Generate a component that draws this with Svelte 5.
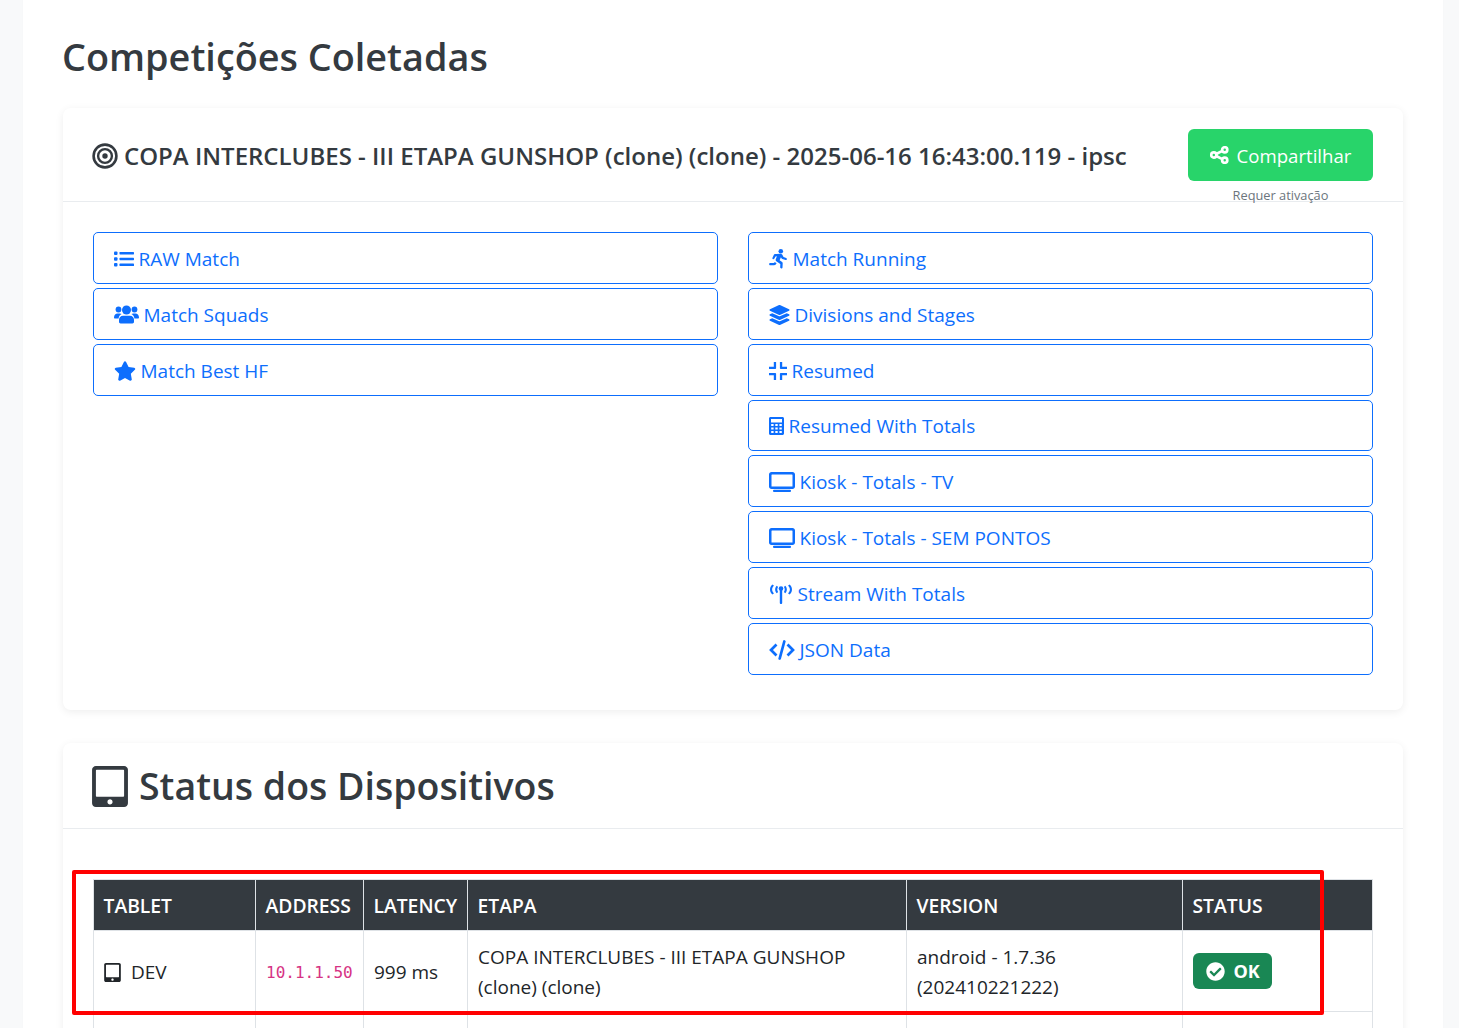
<script>
  const left = [
    { icon: "list", label: "RAW Match" },
    { icon: "users", label: "Match Squads" },
    { icon: "star", label: "Match Best HF" },
  ];
  const right = [
    { icon: "running", label: "Match Running" },
    { icon: "layers", label: "Divisions and Stages" },
    { icon: "compress", label: "Resumed" },
    { icon: "calc", label: "Resumed With Totals" },
    { icon: "tv", label: "Kiosk - Totals - TV" },
    { icon: "tv", label: "Kiosk - Totals - SEM PONTOS" },
    { icon: "tower", label: "Stream With Totals" },
    { icon: "code", label: "JSON Data" },
  ];
  const tablet = "M400 0H48C21.5 0 0 21.5 0 48v416c0 26.5 21.500 48 48 48h352c26.500 0 48-21.500 48-48V48c0-26.500-21.500-48-48-48zM224 480c-17.700 0-32-14.300-32-32s14.300-32 32-32 32 14.300 32 32-14.300 32-32 32zm176-108c0 6.600-5.400 12-12 12H60c-6.600 0-12-5.400-12-12V60c0-6.600 5.400-12 12-12h328c6.600 0 12 5.400 12 12v312z";
</script>

{#snippet icon(name)}
  {#if name === "list"}
    <svg class="ic" style="width:20px" viewBox="0 0 20 16" fill="currentColor"><rect x="0" y="0.500" width="3.500" height="3.500" rx="1" /><rect x="0" y="6.200" width="3.500" height="3.500" rx="1" /><rect x="0" y="12" width="3.500" height="3.500" rx="1" /><rect x="5.500" y="1" width="14.500" height="2.400" rx=".6" /><rect x="5.500" y="6.800" width="14.500" height="2.400" rx=".6" /><rect x="5.500" y="12.600" width="14.500" height="2.400" rx=".6" /></svg>
  {:else if name === "users"}
    <svg class="ic" style="width:25px" viewBox="0 0 25 20" fill="currentColor"><circle cx="4.500" cy="4.500" r="2.900" /><circle cx="20.500" cy="4.500" r="2.900" /><circle cx="12.500" cy="5" r="4.500" /><path d="M0 12.500C0 9.800 1.800 8.500 3.500 8.500h2.300c.7 0 1.300.2 1.800.6-1.700 1-2.800 2.500-3 4.400H1c-.6 0-1-.4-1-1zM25 12.500c0-2.700-1.800-4-3.500-4h-2.300c-.7 0-1.300.2-1.800.6 1.700 1 2.800 2.500 3 4.400H24c.6 0 1-.4 1-1zM9 10.800h7c2.300 0 4 1.700 4 4v2c0 .9-.7 1.600-1.600 1.600H6.600c-.9 0-1.600-.7-1.600-1.600v-2c0-2.300 1.700-4 4-4z" /></svg>
  {:else if name === "star"}
    <svg class="ic" style="width:22px" viewBox="0 0 576 512" fill="currentColor"><path d="M259.300 17.800L194 150.200 47.900 171.500c-26.200 3.800-36.700 36.100-17.700 54.600l105.700 103-25 145.500c-4.500 26.300 23.200 46 46.400 33.700L288 439.600l130.700 68.700c23.200 12.200 50.900-7.400 46.400-33.700l-25-145.500 105.700-103c19-18.500 8.500-50.800-17.700-54.600L382 150.200 316.700 17.800c-11.700-23.600-45.600-23.900-57.400 0z" /></svg>
  {:else if name === "running"}
    <svg class="ic" style="width:19px" viewBox="0 0 19 20" fill="currentColor"><circle cx="11.800" cy="2.300" r="2.300" /><path d="M7.500 5l3.800-.3c.7 0 1.500.3 1.900.9l1.300 2.400 2.700.9c1.200.5.700 2.300-.6 2l-3.200-.9c-.4-.1-.7-.4-.9-.7l-.6-1.100-1.300 3.100 2.500 1.800c.4.300.6.800.6 1.200l-.2 4.100c-.1 1.500-2.300 1.400-2.300-.1l.1-3.300-4-2.800c-.6-.5-.8-1.200-.5-1.900l1.100-3.100-1.400.2-1.100 2.200c-.7 1.300-2.500.4-1.900-.9l1.400-2.900c.2-.4.600-.8 1-.9zM5.800 13l1.800 1.300c-.6 1.100-1.400 2-2.500 2H1.300c-1.500 0-1.500-2.300 0-2.300h3.200c.6 0 1-.4 1.300-1z" /></svg>
  {:else if name === "layers"}
    <svg class="ic" style="width:21px" viewBox="0 0 512 512" fill="currentColor"><path d="M12.400 148l232.900 105.700c6.800 3.100 14.500 3.100 21.300 0L499.600 148c16.500-7.500 16.500-32.500 0-40L266.700 2.300a25.500 25.500 0 0 0-21.300 0L12.400 108c-16.500 7.500-16.500 32.500 0 40zm487.200 88.300l-58.100-26.300-161.700 73.300c-7.600 3.400-15.600 5.200-23.800 5.200s-16.300-1.700-23.800-5.200L70.500 210l-58.100 26.300c-16.500 7.500-16.500 32.500 0 40l232.900 105.600c6.800 3.100 14.500 3.100 21.300 0L499.600 276.300c16.500-7.500 16.500-32.500 0-40zm0 127.800l-57.900-26.200-161.900 73.400c-7.600 3.400-15.600 5.200-23.800 5.200s-16.300-1.700-23.800-5.200L70.300 338l-57.900 26.200c-16.500 7.500-16.500 32.500 0 40l232.900 105.600c6.800 3.100 14.500 3.100 21.300 0L499.600 404c16.500-7.400 16.500-32.400 0-39.900z" /></svg>
  {:else if name === "compress"}
    <svg class="ic" style="width:18px" viewBox="0 0 18 18" fill="currentColor"><path d="M4.800 0h2.300v6.300c0 .4-.4.800-.8.800H0V4.800h4.800zM10.900 0h2.300v4.800H18v2.300h-6.300c-.4 0-.8-.4-.8-.8zM0 10.900h6.300c.4 0 .8.400.8.800V18H4.800v-4.800H0zM11.700 10.900H18v2.300h-4.800V18h-2.300v-6.300c0-.4.400-.8.800-.8z" /></svg>
  {:else if name === "calc"}
    <svg class="ic" style="width:15px" viewBox="0 0 15 18" fill="currentColor"><path fill-rule="evenodd" d="M1.500 0h12C14.300 0 15 .7 15 1.500v15c0 .8-.7 1.500-1.500 1.500h-12C.7 18 0 17.300 0 16.500v-15C0 .7.700 0 1.500 0zM2 2v3.500h11V2zM2.200 7v2h2.400V7zm4.100 0v2h2.400V7zm4.100 0v2h2.400V7zM2.200 10.500v2h2.400v-2zm4.100 0v2h2.400v-2zm4.100 0v2h2.400v-2zM2.200 14v2h2.400v-2zm4.100 0v2h2.400v-2zm4.100 0v2h2.400v-2z" /></svg>
  {:else if name === "tv"}
    <svg class="ic" style="width:26px" viewBox="0 0 26 20" fill="currentColor"><path fill-rule="evenodd" d="M2.500 0h21C24.900 0 26 1.100 26 2.500v12c0 1.400-1.100 2.500-2.500 2.500h-21C1.100 17 0 15.900 0 14.500v-12C0 1.100 1.100 0 2.500 0zM3 2.500c-.3 0-.5.200-.5.500v11.500h21V3c0-.3-.2-.5-.5-.5z" /><rect x="4" y="17.800" width="18" height="2.200" rx="1" /></svg>
  {:else if name === "tower"}
    <svg class="ic" style="width:24px" viewBox="0 0 24 20" fill="currentColor"><circle cx="12" cy="4.500" r="2.300" /><path d="M10.800 5h2.400v14c0 1.500-2.400 1.500-2.400 0zM3.500 .5c-3.300 2.600-3.300 7.400 0 10l1.500-1.300C2.500 7.300 2.500 3.700 5 1.800zM7.800 1.700c-2.200 1.800-2.200 5.800 0 7.600l1.300-1.400C8 6.800 8 4.200 9.100 3.100zM20.500 .5c3.300 2.600 3.300 7.400 0 10L19 9.200c2.500-1.900 2.500-5.500 0-7.400zM16.200 1.700c2.200 1.800 2.200 5.800 0 7.600l-1.300-1.400c1.100-1.100 1.100-3.700 0-4.800z" /></svg>
  {:else if name === "code"}
    <svg class="ic" style="width:26px" viewBox="0 0 26 20" fill="none" stroke="currentColor" stroke-width="2.700"><path d="M7.500 4.500L2 10l5.500 5.500M18.500 4.500L24 10l-5.500 5.500" /><path d="M15.300 1.500L10.700 18.500" stroke-linecap="round" /></svg>
  {/if}
{/snippet}

<div class="page">
  <main class="sheet">
    <h1>Competições Coletadas</h1>

    <section class="card first">
      <header class="card-head">
        <h5>
          <svg class="target" viewBox="0 0 26 26" fill="none" stroke="currentColor"><circle cx="13" cy="13" r="11.400" stroke-width="2.600" /><circle cx="13" cy="13" r="6.900" stroke-width="2.400" /><circle cx="13" cy="13" r="2.700" fill="currentColor" stroke="none" /></svg>
          COPA INTERCLUBES - III ETAPA GUNSHOP (clone) (clone) - 2025-06-16 16:43:00.119 - ipsc
        </h5>
        <div class="share">
          <button class="share-btn">
            <svg viewBox="0 0 20 18" fill="none" stroke="currentColor" stroke-width="2.800"><circle cx="4" cy="9" r="2.700" /><circle cx="15.500" cy="3.500" r="2.700" /><circle cx="15.500" cy="14.500" r="2.700" /><path d="M6.500 8l6.500-3.300M6.500 10l6.500 3.300" /></svg>
            Compartilhar
          </button>
          <small>Requer ativação</small>
        </div>
      </header>
      <div class="links">
        <div class="link-col">
          {#each left as item}
            <a class="link" href="#top">{@render icon(item.icon)}{item.label}</a>
          {/each}
        </div>
        <div class="link-col">
          {#each right as item}
            <a class="link" href="#top">{@render icon(item.icon)}{item.label}</a>
          {/each}
        </div>
      </div>
    </section>

    <section class="card">
      <header class="status-head">
        <h2>
          <svg class="tablet-big" viewBox="0 0 448 512" fill="currentColor"><path d={tablet} /></svg>
          Status dos Dispositivos
        </h2>
      </header>
      <div class="table-wrap">
        <table>
          <colgroup>
            <col class="c1" /><col class="c2" /><col class="c3" /><col class="c4" /><col class="c5" /><col />
          </colgroup>
          <thead>
            <tr>
              <th>TABLET</th>
              <th>ADDRESS</th>
              <th>LATENCY</th>
              <th>ETAPA</th>
              <th>VERSION</th>
              <th>STATUS</th>
            </tr>
          </thead>
          <tbody>
            <tr>
              <td><svg class="tablet" viewBox="0 0 448 512" fill="currentColor"><path d={tablet} /></svg>DEV</td>
              <td><code>10.1.1.50</code></td>
              <td>999 ms</td>
              <td>COPA INTERCLUBES - III ETAPA GUNSHOP (clone) (clone)</td>
              <td>android - 1.7.36 (202410221222)</td>
              <td class="status">
                <span class="badge">
                  <svg viewBox="0 0 512 512" fill="currentColor"><path d="M504 256c0 136.967-111.033 248-248 248S8 392.967 8 256 119.033 8 256 8s248 111.033 248 248zM227.314 387.314l184-184c6.248-6.248 6.248-16.379 0-22.627l-22.627-22.627c-6.248-6.249-16.379-6.249-22.628 0L216 308.118l-70.059-70.059c-6.248-6.248-16.379-6.248-22.628 0l-22.627 22.627c-6.248 6.248-6.248 16.379 0 22.627l104 104c6.249 6.249 16.379 6.249 22.628.001z" /></svg>
                  OK
                </span>
              </td>
            </tr>
            <tr class="muted">
              <td><svg class="tablet" viewBox="0 0 448 512" fill="currentColor"><path d={tablet} /></svg></td>
              <td></td><td></td><td></td><td></td><td></td>
            </tr>
          </tbody>
        </table>
      </div>
    </section>
  </main>
  <div class="marker"></div>
</div>

<style>
  :global(body) {
    background: #f8f9fa;
    overflow: hidden;
  }

  .page {
    position: relative;
    height: 1028px;
    overflow: hidden;
    font-family: "Open Sans", "Noto Sans", sans-serif;
    color: #212529;
  }

  .sheet {
    width: 1340px;
    min-height: 1028px;
    margin-left: 23px;
    padding: 32px 40px 0;
    background: #fff;
    box-shadow: 0 0 2px rgba(0, 0, 0, 0.02);
  }

  h1 {
    margin: 0 0 26px -1px;
    font-size: 37.800px;
    line-height: 50px;
    font-weight: 600;
    color: #343a40;
  }

  .card {
    background: #fff;
    border-radius: 8px;
    box-shadow: 0 2px 8px rgba(0, 0, 0, 0.07);
  }

  .card.first {
    margin-bottom: 33px;
    padding-bottom: 35px;
  }

  .card-head {
    display: flex;
    justify-content: space-between;
    align-items: center;
    height: 94px;
    padding: 0 30px;
    border-bottom: 1px solid #e9ecef;
    box-sizing: border-box;
  }

  h5 {
    margin: 3px 0 0;
    display: flex;
    align-items: center;
    gap: 6px;
    font-size: 24px;
    line-height: 30px;
    font-weight: 600;
    color: #343a40;
    white-space: nowrap;
  }

  .target {
    width: 26px;
    height: 26px;
    flex: none;
    margin-left: -1px;
  }

  .share {
    width: 185px;
    height: 52px;
    margin-top: 1px;
    text-align: center;
  }

  .share-btn {
    display: flex;
    align-items: center;
    justify-content: center;
    gap: 8px;
    width: 100%;
    height: 52px;
    border: 0;
    border-radius: 6px;
    background: #28d46a;
    color: #fff;
    font: inherit;
    font-size: 18.600px;
  }

  .share-btn svg {
    width: 19px;
    height: 18px;
  }

  small {
    display: block;
    margin-top: 6px;
    font-size: 12.800px;
    line-height: 17px;
    color: #6c757d;
  }

  .links {
    display: grid;
    grid-template-columns: 1fr 1fr;
    gap: 30px;
    padding: 30.200px 30px 0;
    align-items: start;
  }

  .link-col {
    display: flex;
    flex-direction: column;
    gap: 4px;
  }

  .link {
    display: flex;
    align-items: center;
    gap: 5px;
    box-sizing: border-box;
    height: 51.800px;
    padding: 2px 20px 0;
    border: 1px solid #0d6efd;
    border-radius: 5px;
    color: #0d6efd;
    font-size: 19px;
    text-decoration: none;
  }

  .ic {
    flex: none;
    height: 20px;
    margin-left: -0.500px;
  }

  .status-head {
    height: 86px;
    padding: 2px 30px 0;
    border-bottom: 1px solid #e9ecef;
    box-sizing: border-box;
    display: flex;
    align-items: center;
  }

  h2 {
    margin: 0;
    display: flex;
    align-items: center;
    gap: 11px;
    font-size: 37.500px;
    line-height: 50px;
    font-weight: 600;
    color: #343a40;
  }

  .tablet-big {
    width: 36px;
    height: 41px;
    margin-left: -1px;
  }

  .table-wrap {
    padding: 50.500px 30px 0;
  }

  table {
    width: 100%;
    table-layout: fixed;
    border-collapse: collapse;
    font-size: 19px;
    line-height: 30px;
  }

  .c1 { width: 162px; }
  .c2 { width: 108px; }
  .c3 { width: 104px; }
  .c4 { width: 439px; }
  .c5 { width: 276px; }

  th {
    height: 51px;
    padding: 1px 10px 0 9.500px;
    box-sizing: border-box;
    background: #343a40;
    color: #fff;
    border: 1px solid #dee2e6;
    text-align: left;
    font-size: 19.300px;
    font-weight: 600;
    white-space: nowrap;
  }

  td {
    height: 81px;
    padding: 11px 10px 9px;
    box-sizing: border-box;
    border: 1px solid #dee2e6;
    color: #212529;
    vertical-align: middle;
  }

  td.status {
    padding: 10px;
  }

  .tablet {
    width: 17px;
    height: 19px;
    margin-right: 10px;
    vertical-align: -3px;
    color: #212529;
  }

  .muted .tablet {
    color: #adb5bd;
  }

  code {
    font-family: "DejaVu Sans Mono", "Liberation Mono", monospace;
    font-size: 16px;
    color: #d63384;
  }

  .badge {
    display: inline-flex;
    align-items: center;
    gap: 9px;
    height: 36px;
    padding: 0 12.500px;
    border-radius: 6px;
    background: #198754;
    color: #fff;
    font-size: 18px;
    font-weight: 700;
    vertical-align: middle;
  }

  .badge svg {
    width: 19px;
    height: 19px;
  }

  .marker {
    position: absolute;
    left: 72px;
    top: 870px;
    width: 1252px;
    height: 145px;
    box-sizing: border-box;
    border: 4px solid #ff0000;
    border-radius: 2px;
  }
</style>
